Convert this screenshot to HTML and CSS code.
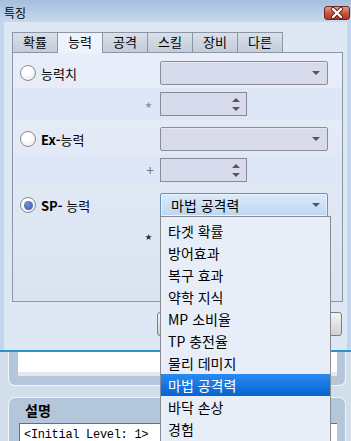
FILE: index.html
```html
<!DOCTYPE html>
<html lang="ko">
<head>
    <meta charset="UTF-8">
    <title>특징</title>
    <link rel="stylesheet" href="styles.css">
</head>
<body>
<div class="screen">
    <div class="window">
        <div class="titlebar">
            <span class="title">특징</span>
            <span class="close">
                <svg width="24" height="12" viewBox="0 0 24 12">
                    <path d="M8 2 L16 10 M16 2 L8 10" stroke="#5a1a14" stroke-width="4" stroke-linecap="round"/>
                    <path d="M8 2 L16 10 M16 2 L8 10" stroke="#fff" stroke-width="2.4" stroke-linecap="round"/>
                </svg>
            </span>
        </div>
        <div class="window-body">
            <div class="tabs">
                <div class="tab">확률</div>
                <div class="tab active">능력</div>
                <div class="tab">공격</div>
                <div class="tab">스킬</div>
                <div class="tab">장비</div>
                <div class="tab">다른</div>
            </div>
            <div class="panel">
                <div class="group">
                    <div class="main-row">
                        <label class="radio"><span class="radio-dot"></span><span>능력치</span></label>
                        <div class="combo"><span></span><i class="arrow-down"></i></div>
                    </div>
                    <div class="spin-row">
                        <span class="sign star-light">★</span>
                        <div class="spin"><i class="arrow-up"></i><i class="arrow-down"></i></div>
                    </div>
                </div>
                <div class="group">
                    <div class="main-row">
                        <label class="radio"><span class="radio-dot"></span><span><b>Ex-</b>능력</span></label>
                        <div class="combo"><span></span><i class="arrow-down"></i></div>
                    </div>
                    <div class="spin-row">
                        <span class="sign plus">+</span>
                        <div class="spin"><i class="arrow-up"></i><i class="arrow-down"></i></div>
                    </div>
                </div>
                <div class="group">
                    <div class="main-row">
                        <label class="radio"><span class="radio-dot checked"></span><span><b>SP-</b> 능력</span></label>
                        <div class="combo focused"><span>마법 공격력</span><i class="arrow-down"></i></div>
                    </div>
                    <div class="spin-row plain">
                        <span class="sign star-dark">★</span>
                        <div class="spin"><i class="arrow-up"></i><i class="arrow-down"></i></div>
                    </div>
                </div>
            </div>
            <div class="actions">
                <span class="action-btn"></span>
            </div>
        </div>
    </div>

    <div class="backdrop">
        <div class="box box-top">
            <div class="field"></div>
        </div>
        <div class="box box-desc">
            <div class="box-title">설명</div>
            <div class="field text-field">&lt;Initial Level: 1&gt;</div>
        </div>
    </div>

    <ul class="dropdown">
        <li>타겟 확률</li>
        <li>방어효과</li>
        <li>복구 효과</li>
        <li>약학 지식</li>
        <li>MP 소비율</li>
        <li>TP 충전율</li>
        <li>물리 데미지</li>
        <li class="selected">마법 공격력</li>
        <li>바닥 손상</li>
        <li>경험</li>
    </ul>
</div>
</body>
</html>
```

FILE: styles.css
```css
/* Estilos generales */
body {
    margin: 0;
    font-family: "Noto Sans CJK KR", "Noto Sans", sans-serif;
    font-size: 13px;
    color: #000;
}

.screen {
    position: relative;
    width: 351px;
    height: 441px;
    overflow: hidden;
    background: #d3deeb;
}

/* Ventana de dialogo */
.window {
    height: 350px;
    display: flex;
    flex-direction: column;
    background: #c2d6ef;
    border-bottom: 2px solid #2f93c4;
}

.titlebar {
    height: 22px;
    flex-shrink: 0;
    display: flex;
    justify-content: space-between;
    padding: 0 1px 0 4px;
    background: linear-gradient(#a6bfdd, #c6d8ee);
}

.title {
    line-height: 25px;
    font-size: 12px;
}

.close {
    margin-top: 6px;
    width: 26px;
    height: 14px;
    box-sizing: border-box;
    border: 1px solid #6a2a22;
    border-radius: 3px;
    background: linear-gradient(#e59a88, #c8503c 55%, #b43a28);
    display: flex;
    align-items: center;
    justify-content: center;
}

.window-body {
    flex: 1;
    margin: 0 4px;
    padding: 10px 4px 0 8px;
    background: #dee7f4;
}

.tabs {
    display: flex;
    height: 20px;
}

.tab {
    width: 46px;
    height: 20px;
    box-sizing: border-box;
    margin-right: -1px;
    border: 1px solid #8c96a4;
    border-bottom: none;
    background: linear-gradient(#d9e0ea, #c3ccd9);
    text-align: center;
    line-height: 18px;
}

.tab.active {
    position: relative;
    z-index: 1;
    height: 21px;
    background: #edf2fb;
}

.panel {
    height: 250px;
    box-sizing: border-box;
    border: 1px solid #8c96a4;
    background: linear-gradient(#e8eef9, #dbe3f1);
    padding-top: 8px;
}

.group + .group {
    margin-top: 7px;
}

.main-row,
.spin-row {
    display: grid;
    grid-template-columns: 147px 168px;
    align-items: center;
}

.main-row {
    height: 24px;
}

.spin-row {
    margin-top: 3px;
    padding: 4px 0;
    background: #dde7f7;
}

.spin-row.plain {
    background: transparent;
}

.radio {
    display: flex;
    align-items: center;
    gap: 5px;
    padding-left: 7px;
    line-height: 1;
}

.radio b {
    font-weight: 600;
}

.radio-dot {
    width: 16px;
    height: 16px;
    box-sizing: border-box;
    border-radius: 50%;
    border: 1px solid #8b8c8e;
    background: radial-gradient(circle at 40% 35%, #ffffff 30%, #e2e4e8);
    display: flex;
    align-items: center;
    justify-content: center;
}

.radio-dot.checked::after {
    content: '';
    width: 9px;
    height: 9px;
    border-radius: 50%;
    background: radial-gradient(circle at 40% 35%, #6d90d6, #2f56a8);
}

.sign {
    text-align: right;
    padding-right: 8px;
    line-height: 1;
}

.star-light {
    font-size: 7px;
    color: #7f92b8;
}

.star-dark {
    font-size: 7px;
    color: #1c2a52;
}

.plus {
    font-size: 14px;
    color: #7a7a7a;
    padding-right: 6px;
}

/* Combos y spinners */
.combo {
    height: 24px;
    box-sizing: border-box;
    border: 1px solid #898d97;
    border-radius: 2px;
    background: #d7dbec;
    box-shadow: inset 0 1px 0 #e6e9f4;
    display: flex;
    align-items: center;
    justify-content: space-between;
    padding: 0 7px 0 10px;
    font-size: 14px;
}

.combo.focused {
    border-color: #6a8fba;
    background: linear-gradient(#dbebfb, #bcd6f1);
    box-shadow: inset 0 0 0 1px #eaf3fd;
}

.spin {
    width: 87px;
    height: 24px;
    box-sizing: border-box;
    border: 1px solid #858a93;
    background: #d7dbec;
    display: flex;
    flex-direction: column;
    align-items: flex-end;
    justify-content: center;
    gap: 5px;
    padding-right: 6px;
}

.arrow-down,
.arrow-up {
    display: block;
    width: 0;
    height: 0;
    border-left: 4px solid transparent;
    border-right: 4px solid transparent;
}

.arrow-down {
    border-top: 4px solid #55585e;
}

.arrow-up {
    border-bottom: 4px solid #55585e;
}

.actions {
    display: flex;
    justify-content: flex-end;
    padding: 10px 1px 0 0;
}

.action-btn {
    width: 185px;
    height: 24px;
    box-sizing: border-box;
    border: 1px solid #7a7d82;
    border-radius: 3px;
    background: linear-gradient(#f4f4f4, #e2e2e2 50%, #cfd0d2);
}

/* Aplicacion de fondo */
.backdrop {
    padding: 0 5px 0 8px;
}

.box {
    background: #b4c6da;
    border: 1px solid #f2f6fb;
}

.box-top {
    height: 33px;
    border-top: none;
    border-radius: 0 0 7px 7px;
    padding: 0 8px 0 9px;
}

.field {
    background: #fff;
}

.box-top .field {
    height: 20px;
    border-bottom: 4px solid #e3e7ee;
}

.box-desc {
    margin-top: 11px;
    height: 60px;
    border-bottom: none;
    border-radius: 7px 7px 0 0;
    padding: 0 8px 0 10px;
}

.box-title {
    font-weight: bold;
    font-size: 14px;
    line-height: 24px;
    padding-left: 6px;
    height: 25px;
}

.text-field {
    height: 40px;
    border-top: 1px solid #6d6f73;
    border-left: 1px solid #6d6f73;
    font-family: "Liberation Mono", monospace;
    font-size: 12px;
    letter-spacing: -0.3px;
    padding: 4px 0 0 4px;
}

/* Lista desplegable */
.dropdown {
    position: absolute;
    left: 160px;
    top: 216px;
    width: 171px;
    height: 240px;
    box-sizing: border-box;
    margin: 0;
    padding: 3px 0 0;
    list-style: none;
    border: 1px solid #878c95;
    background: #e8eef8;
    font-size: 14px;
}

.dropdown li {
    height: 22px;
    line-height: 22px;
    padding-left: 7px;
}

.dropdown li.selected {
    color: #fff;
    background: linear-gradient(#2a8af2, #0563d2);
}
```
